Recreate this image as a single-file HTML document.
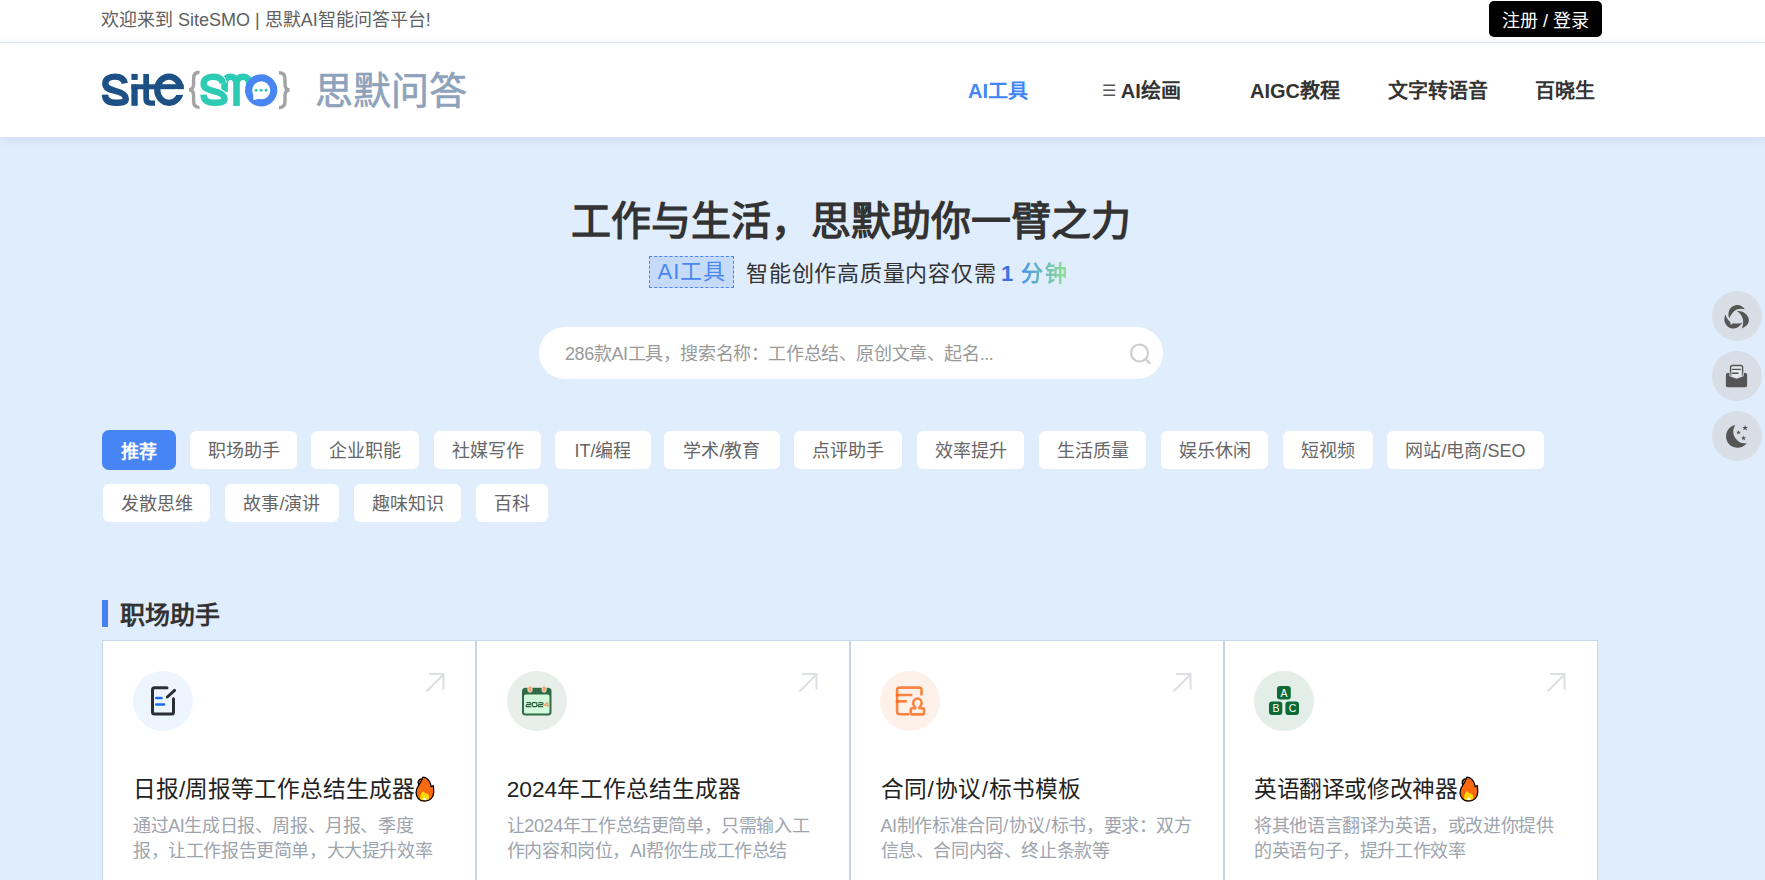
<!DOCTYPE html>
<html lang="zh-CN"><head><meta charset="utf-8">
<style>
*{box-sizing:border-box;margin:0;padding:0}
html,body{width:1765px;height:880px;overflow:hidden}
body{position:relative;background:#e0edfd;font-family:"Liberation Sans",sans-serif;color:#333}
.a{position:absolute;white-space:nowrap}
#topbar{position:absolute;left:0;top:0;width:1765px;height:43px;background:#fff;border-bottom:1px solid #e8edf3}
#header{position:absolute;left:0;top:43px;width:1765px;height:94px;background:#fff;box-shadow:0 2px 10px rgba(100,130,170,.16)}
.welcome{left:101px;top:0;height:42px;line-height:40px;font-size:18px;color:#606060}
.login{left:1489px;top:1px;width:113px;height:36px;border-radius:5px;background:#000;color:#fff;font-size:18px;line-height:40px;text-align:center}
.nav{top:44px;height:94px;line-height:94px;font-size:20px;font-weight:bold;color:#333}
.hero-title{left:0;width:1701px;top:191px;text-align:center;font-size:40px;font-weight:bold;color:#333;line-height:60px}
.sub{top:254px;font-size:22px;color:#333;line-height:40px}
.aitool{left:649px;top:256px;width:85px;height:32px;border:1px dashed #4a86f0;background:#c6dbfa;color:#4a86f0;font-size:22px;line-height:30px;text-align:center;letter-spacing:1px;text-indent:1px}
.search{left:539px;top:327px;width:624px;height:52px;border-radius:26px;background:#fff}
.ph{left:565px;top:328px;line-height:52px;font-size:18px;color:#999;letter-spacing:-0.4px}
.tag{height:38px;line-height:40px;background:#fff;border-radius:6px;color:#666;font-size:18px;text-align:center}
.tag.on{background:#4785f5;color:#fff;font-weight:bold;border-radius:7px;height:40px;line-height:44px}
.sec{left:120px;top:595px;font-size:25px;font-weight:bold;color:#333;line-height:40px}
.bar{left:102px;top:600px;width:6px;height:27px;background:#4680f5}
.card{top:640px;height:260px;background:#fff;border:1px solid #c6d5e7;border-top-color:#c9d8ea}
.ic{width:60px;height:60px;border-radius:30px}
.ctitle{font-size:22.7px;color:#222;line-height:30px}
.cdesc{font-size:18px;letter-spacing:-0.4px;color:#9ea4ad;line-height:24.5px}
.fl{left:1712px;width:50px;height:50px;border-radius:25px;background:#d9dee6}
</style></head><body>
<div id="topbar"></div>
<div id="header"></div>
<div class="a welcome">欢迎来到 SiteSMO | 思默AI智能问答平台!</div>
<div class="a login">注册 / 登录</div>

<svg class="a" style="left:95px;top:62px" width="205" height="56" viewBox="95 62 205 56">
<g fill="none" stroke-linecap="butt">
<path d="M124.8 83.3 C123.8 78.6 119.8 76.6 114.8 76.6 C108.8 76.6 105.3 79.3 105.3 83.6 C105.3 88.2 109.5 89.6 115.5 91 C122 92.5 125.8 94.5 125.8 98.8 C125.8 102.6 121.5 102.8 115.5 102.8 C109 102.8 105.2 100.6 105 94.6" stroke="#1d5085" stroke-width="6.4"/>
</g>
<g fill="#1d5085">
<rect x="131.4" y="73.9" width="6.3" height="6"/>
<rect x="131.4" y="84.5" width="6.3" height="21.3"/>
<rect x="131.4" y="84.3" width="24" height="5"/>
<path d="M143.3 73.9 H149 V98.4 Q149 100.5 151.2 100.5 H155 V105.8 H150.3 Q143.3 105.8 143.3 98.8 Z"/>
</g>
<ellipse cx="169" cy="89.7" rx="11.75" ry="13.15" fill="none" stroke="#1d5085" stroke-width="6.3"/><rect x="157.6" y="84.2" width="26" height="5" fill="#1d5085"/><rect x="175.5" y="89.2" width="10" height="5.7" fill="#fff"/>
<path d="M199.5 72.3 Q193.6 72.3 193.6 78.3 V84 Q193.6 89.7 189 89.7 Q193.6 89.7 193.6 95.4 V101.3 Q193.6 107.4 199.5 107.4" fill="none" stroke="#a3a3a3" stroke-width="3.4"/>
<path d="M279 72.8 Q285 72.8 285 78.8 V84.3 Q285 90 289.6 90 Q285 90 285 95.7 V101.6 Q285 107.7 279 107.7" fill="none" stroke="#a3a3a3" stroke-width="3.4"/>
<path d="M224.6 92 V84 Q224.6 76.7 230.4 76.7 Q236.5 76.7 236.5 84 V106 M236.5 84 Q236.5 76.7 243 76.7 Q249.2 76.7 249.2 84 V96" fill="none" stroke="#2ccbb4" stroke-width="6.6"/>
<path d="M223 83.3 C222 78.6 218 76.7 213.2 76.7 C207.2 76.7 203.6 79.4 203.6 83.7 C203.6 88.3 207.8 89.7 213.8 91.1 C220.3 92.6 224.6 94.5 224.6 98.8 C224.6 102.6 220 102.7 214 102.7 C207.5 102.7 203.7 100.6 203.5 94.6" fill="none" stroke="#fff" stroke-width="8.2"/>
<path d="M223 83.3 C222 78.6 218 76.7 213.2 76.7 C207.2 76.7 203.6 79.4 203.6 83.7 C203.6 88.3 207.8 89.7 213.8 91.1 C220.3 92.6 224.6 94.5 224.6 98.8 C224.6 102.6 220 102.7 214 102.7 C207.5 102.7 203.7 100.6 203.5 94.6" fill="none" stroke="#2ccbb4" stroke-width="6.4"/>
<circle cx="261.2" cy="90.3" r="12.6" fill="#fff" stroke="#4886f3" stroke-width="7.1"/>
<path d="M253.2 94.5 L253.4 100.2 L259 98.8 Z" fill="#fff"/>
<circle cx="256.1" cy="90.3" r="1.5" fill="#2ccbb4"/><circle cx="261.1" cy="90.3" r="1.5" fill="#2ccbb4"/><circle cx="266.1" cy="90.3" r="1.5" fill="#2ccbb4"/>
</svg>
<div class="a" style="left:315px;top:63px;font-size:38px;line-height:56px;color:#8fa2bb;-webkit-text-stroke:0.6px #8fa2bb">思默问答</div>
<div class="a nav" style="left:968px;color:#4285f4">AI工具</div>
<div class="a nav" style="left:1102px"><span style="font-weight:normal;font-size:16px;color:#555;position:relative;top:-2px">☰</span> AI绘画</div>
<div class="a nav" style="left:1250px">AIGC教程</div>
<div class="a nav" style="left:1388px">文字转语音</div>
<div class="a nav" style="left:1535px">百晓生</div>

<div class="a hero-title">工作与生活，思默助你一臂之力</div>
<div class="a aitool">AI工具</div>
<div class="a sub" style="left:746px;letter-spacing:0.75px">智能创作高质量内容仅需</div><div class="a sub" style="left:1001px;font-weight:bold;color:#3a72e0">1</div><div class="a sub" style="left:1021px;letter-spacing:1.5px;font-weight:bold;background:linear-gradient(90deg,#4a93e6,#91e58a);-webkit-background-clip:text;background-clip:text;color:transparent">分钟</div>

<div class="a search"></div>
<div class="a ph">286款AI工具，搜索名称：工作总结、原创文章、起名...</div>
<svg class="a" style="left:1128px;top:341px" width="26" height="26" viewBox="0 0 26 26"><circle cx="11.5" cy="12" r="8.5" stroke="#cdcdcd" stroke-width="2.2" fill="none"/><path d="M17.5 18 L21.5 22" stroke="#cdcdcd" stroke-width="2.4" stroke-linecap="round"/></svg>

<div class="a tag on" style="left:102px;top:430px;width:74px">推荐</div>
<div class="a tag" style="left:190px;top:431px;width:107px">职场助手</div>
<div class="a tag" style="left:311px;top:431px;width:108px">企业职能</div>
<div class="a tag" style="left:434px;top:431px;width:107px">社媒写作</div>
<div class="a tag" style="left:555px;top:431px;width:96px">IT/编程</div>
<div class="a tag" style="left:664px;top:431px;width:116px">学术/教育</div>
<div class="a tag" style="left:794px;top:431px;width:108px">点评助手</div>
<div class="a tag" style="left:917px;top:431px;width:107px">效率提升</div>
<div class="a tag" style="left:1039px;top:431px;width:107px">生活质量</div>
<div class="a tag" style="left:1161px;top:431px;width:107px">娱乐休闲</div>
<div class="a tag" style="left:1283px;top:431px;width:90px">短视频</div>
<div class="a tag" style="left:1387px;top:431px;width:157px">网站/电商/SEO</div>
<div class="a tag" style="left:103px;top:484px;width:107px">发散思维</div>
<div class="a tag" style="left:225px;top:484px;width:114px">故事/演讲</div>
<div class="a tag" style="left:354px;top:484px;width:107px">趣味知识</div>
<div class="a tag" style="left:476px;top:484px;width:72px">百科</div>

<div class="a bar"></div>
<div class="a sec">职场助手</div>
<div class="a card" style="left:102px;width:374px"></div>
<div class="a ic" style="left:133px;top:671px;background:#edf5fe"><svg width="60" height="60" viewBox="0 0 60 60"><path d="M34 16.8 H21.5 Q19.5 16.8 19.5 18.8 V41.1 Q19.5 43.1 21.5 43.1 H38.5 Q40.5 43.1 40.5 41.1 V27.8" stroke="#2a2e35" stroke-width="3" fill="none" stroke-linecap="round"/><path d="M34.3 26 L41.6 19.4" stroke="#2a2e35" stroke-width="3" stroke-linecap="round"/><path d="M23.2 26.9 H28.5 M23.2 33.5 H31" stroke="#1a6cf5" stroke-width="2.5" stroke-linecap="round"/></svg></div>
<svg class="a" style="left:422.5px;top:670px" width="24" height="24" viewBox="0 0 24 24"><path d="M3.5 21.5 L20.5 4.5 M6 4 H20.5 V19.5" stroke="#dcdfe5" stroke-width="2" fill="none"/></svg>
<div class="a ctitle" style="left:133px;top:774px">日报/周报等工作总结生成器</div>
<div class="a cdesc" style="left:133px;top:814px">通过AI生成日报、周报、月报、季度<br>报，让工作报告更简单，大大提升效率</div>
<div class="a card" style="left:476px;width:374px"></div>
<div class="a ic" style="left:507px;top:671px;background:#e8efea"><svg width="60" height="60" viewBox="0 0 60 60"><rect x="15" y="16.7" width="29.5" height="27.8" rx="3.5" fill="#2f6b45"/><rect x="17" y="23.5" width="25.5" height="19" rx="1.5" fill="#d2fadc"/><rect x="20.9" y="14.9" width="4.2" height="6.4" rx="2.1" fill="#f7a76a" stroke="#e8efea" stroke-width="0.8"/><rect x="35" y="14.9" width="4.2" height="6.4" rx="2.1" fill="#f7a76a" stroke="#e8efea" stroke-width="0.8"/><g fill="none" stroke-width="1.25" stroke-linejoin="round"><path d="M19.3 31.5 H23 Q23.9 31.5 23.9 32.4 V32.8 Q23.9 33.7 23 33.7 H20.2 Q19.3 33.7 19.3 34.6 V35.5 H24.1" stroke="#2f5f40"/><rect x="25.3" y="31.5" width="4.6" height="4" rx="0.9" stroke="#2f5f40"/><path d="M31.3 31.5 H35 Q35.9 31.5 35.9 32.4 V32.8 Q35.9 33.7 35 33.7 H32.2 Q31.3 33.7 31.3 34.6 V35.5 H36.1" stroke="#2f5f40"/><path d="M40.6 36 V31.3 L37.1 34.3 H42" stroke="#f7a76a"/></g></svg></div>
<svg class="a" style="left:796.25px;top:670px" width="24" height="24" viewBox="0 0 24 24"><path d="M3.5 21.5 L20.5 4.5 M6 4 H20.5 V19.5" stroke="#dcdfe5" stroke-width="2" fill="none"/></svg>
<div class="a ctitle" style="left:506.75px;top:774px">2024年工作总结生成器</div>
<div class="a cdesc" style="left:506.75px;top:814px">让2024年工作总结更简单，只需输入工<br>作内容和岗位，AI帮你生成工作总结</div>
<div class="a card" style="left:850px;width:374px"></div>
<div class="a ic" style="left:880px;top:671px;background:#fef1ea"><svg width="60" height="60" viewBox="0 0 60 60"><g fill="none" stroke="#f98543" stroke-width="2.6" stroke-linecap="round" stroke-linejoin="round"><path d="M28.2 43.3 H19.6 Q17.1 43.3 17.1 40.8 V19.1 Q17.1 16.6 19.6 16.6 H39 Q41.5 16.6 41.5 19.1 V23.5"/><path d="M17.6 24 H31.2 M17.6 30.4 H25.8"/><path d="M35.3 36.4 C33.9 35.4 33.2 33.9 33.2 32.2 C33.2 29.5 35.1 27.5 37.4 27.5 C39.7 27.5 41.6 29.5 41.6 32.2 C41.6 33.9 40.9 35.4 39.5 36.4 V37.2 H42.8 Q44 37.2 44 38.4 V42.2 Q44 43.4 42.8 43.4 H32 Q30.8 43.4 30.8 42.2 V38.4 Q30.8 37.2 32 37.2 H35.3 Z"/></g><circle cx="17.2" cy="24" r="1.5" fill="#ff6a1a"/><circle cx="17.2" cy="30.4" r="1.5" fill="#ff6a1a"/></svg></div>
<svg class="a" style="left:1170.0px;top:670px" width="24" height="24" viewBox="0 0 24 24"><path d="M3.5 21.5 L20.5 4.5 M6 4 H20.5 V19.5" stroke="#dcdfe5" stroke-width="2" fill="none"/></svg>
<div class="a ctitle" style="left:880.5px;top:774px">合同<span style="margin:0 1px">/</span>协议<span style="margin:0 1px">/</span>标书模板</div>
<div class="a cdesc" style="left:880.5px;top:814px">AI制作标准合同<span style="margin:0 1px">/</span>协议<span style="margin:0 1px">/</span>标书，要求：双方<br>信息、合同内容、终止条款等</div>
<div class="a card" style="left:1224px;width:374px"></div>
<div class="a ic" style="left:1254px;top:671px;background:#e4eee9"><svg width="60" height="60" viewBox="0 0 60 60"><rect x="23" y="15" width="13.8" height="13.5" rx="3" fill="#0c6b34"/><rect x="15" y="30.5" width="13.3" height="13.5" rx="3" fill="#0c6b34"/><rect x="31.4" y="30.5" width="13.6" height="13.5" rx="3" fill="#0c6b34"/><g font-family="Liberation Sans" font-size="10.5" fill="#fff" text-anchor="middle"><text x="30.1" y="25.9">A</text><text x="22" y="40.9">B</text><text x="38.5" y="40.9">C</text></g></svg></div>
<svg class="a" style="left:1543.75px;top:670px" width="24" height="24" viewBox="0 0 24 24"><path d="M3.5 21.5 L20.5 4.5 M6 4 H20.5 V19.5" stroke="#dcdfe5" stroke-width="2" fill="none"/></svg>
<div class="a ctitle" style="left:1254px;top:774px;letter-spacing:-0.4px">英语翻译或修改神器</div>
<div class="a cdesc" style="left:1254.25px;top:814px">将其他语言翻译为英语，或改进你提供<br>的英语句子，提升工作效率</div>

<svg class="a" style="left:415px;top:775.8px" width="20" height="26" viewBox="-0.5 -0.5 20 26"><path d="M9.1 24.6 C4 24.6 0.6 21 0.6 16 C0.6 12.5 2 10.3 3.4 8.4 C2.6 7 2.6 4.8 3.6 3.5 C4.4 2.4 5.6 2.2 6.5 3 C6.7 1.8 7 1 7.4 0.7 C10.5 0.8 14.5 3.5 15.2 8 C15.3 9 15.4 9.8 15.6 10.2 C16.5 9.8 17.2 9.3 17.9 9.2 C18.1 11.5 18.2 13.5 18.2 15.8 C18.2 21 14.5 24.6 9.1 24.6 Z" fill="#f96a10" stroke="#000" stroke-width="1.3" stroke-linejoin="round"/><path d="M3.4 8.4 C4.5 7 5.5 5.5 6.5 3" fill="none" stroke="#000" stroke-width="1.1"/><path d="M4.6 22.4 C4.3 18.8 5.8 15.8 7.8 14.4 C8.5 16.4 10.5 17 12 17.3 C13.6 18.4 14.1 20.6 13.3 22.5 C11.5 24 6.5 24 4.6 22.4 Z" fill="#ffd800"/><path d="M7.3 22.9 C7.4 21.6 8 20.8 8.7 20.4 C9.2 21.2 10.1 21.5 10.8 21.9 C11 22.4 11 23 10.8 23.4 C9.8 23.7 8.2 23.6 7.3 22.9 Z" fill="#fff"/></svg>
<svg class="a" style="left:1459px;top:775.8px" width="20" height="26" viewBox="-0.5 -0.5 20 26"><path d="M9.1 24.6 C4 24.6 0.6 21 0.6 16 C0.6 12.5 2 10.3 3.4 8.4 C2.6 7 2.6 4.8 3.6 3.5 C4.4 2.4 5.6 2.2 6.5 3 C6.7 1.8 7 1 7.4 0.7 C10.5 0.8 14.5 3.5 15.2 8 C15.3 9 15.4 9.8 15.6 10.2 C16.5 9.8 17.2 9.3 17.9 9.2 C18.1 11.5 18.2 13.5 18.2 15.8 C18.2 21 14.5 24.6 9.1 24.6 Z" fill="#f96a10" stroke="#000" stroke-width="1.3" stroke-linejoin="round"/><path d="M3.4 8.4 C4.5 7 5.5 5.5 6.5 3" fill="none" stroke="#000" stroke-width="1.1"/><path d="M4.6 22.4 C4.3 18.8 5.8 15.8 7.8 14.4 C8.5 16.4 10.5 17 12 17.3 C13.6 18.4 14.1 20.6 13.3 22.5 C11.5 24 6.5 24 4.6 22.4 Z" fill="#ffd800"/><path d="M7.3 22.9 C7.4 21.6 8 20.8 8.7 20.4 C9.2 21.2 10.1 21.5 10.8 21.9 C11 22.4 11 23 10.8 23.4 C9.8 23.7 8.2 23.6 7.3 22.9 Z" fill="#fff"/></svg>
<div class="a fl" style="top:291px"><svg width="50" height="50" viewBox="0 0 50 50"><g fill="#555"><path d="M17.3 27.2 C15 22 17.5 15.5 23.5 14.2 C27.5 13.4 30.8 15.2 32.8 18.3 C29.5 17.4 25 17.6 21.8 20.4 C19.8 22.3 18.3 24.6 17.3 27.2 Z"/><path d="M25 20.2 C30 19.6 34.8 22.5 36.5 27 C38 31.5 35 35.5 29.6 37.4 C31.6 33.6 31.8 29 29.8 25.3 C28.6 23 27 21.2 25 20.2 Z"/><path d="M13.4 23.3 C11.3 28.5 12.6 33.5 16.6 36.2 C20.6 38.9 26.5 37.8 30.4 31.4 C27.4 32.6 24 32.9 20.8 32.3 L18.7 34.1 L18.4 31.3 C15.9 29 14 26.5 13.4 23.3 Z"/></g></svg></div>
<div class="a fl" style="top:351px"><svg width="50" height="50" viewBox="0 0 50 50"><rect x="18.6" y="14.5" width="12" height="14" rx="1.8" fill="#e3e8ef" stroke="#555" stroke-width="1.4"/><path d="M20.4 18.4 H28.3 M20.4 22.3 H26" stroke="#555" stroke-width="1.4" stroke-linecap="round"/><path d="M13.4 24 Q13.4 21.4 16 21.4 H17.9 V24.9 L24.6 27.3 L31.3 24.9 V21.4 H33 Q35.6 21.4 35.6 24 V34.3 Q35.6 36.8 33 36.8 H16 Q13.4 36.8 13.4 34.3 Z" fill="#555" stroke="#d9dee6" stroke-width="0.9"/></svg></div>
<div class="a fl" style="top:411px"><svg width="50" height="50" viewBox="0 0 50 50"><g fill="#555"><path d="M23.3 14 A11.5 11.5 0 1 0 34.7 32.2 A11.8 11.8 0 0 1 23.3 14 Z"/><path d="M33.10 13.90 L33.84 15.88 L35.95 15.97 L34.30 17.29 L34.86 19.33 L33.10 18.16 L31.34 19.33 L31.90 17.29 L30.25 15.97 L32.36 15.88 Z"/><path d="M26.50 19.20 L27.09 20.78 L28.78 20.86 L27.46 21.91 L27.91 23.54 L26.50 22.61 L25.09 23.54 L25.54 21.91 L24.22 20.86 L25.91 20.78 Z"/><path d="M31.60 24.60 L32.24 26.32 L34.07 26.40 L32.64 27.54 L33.13 29.30 L31.60 28.29 L30.07 29.30 L30.56 27.54 L29.13 26.40 L30.96 26.32 Z"/></g></svg></div>
</body></html>
